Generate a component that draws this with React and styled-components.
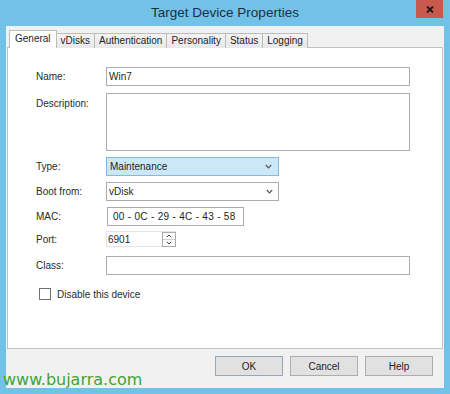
import React from "react"
import styled, { createGlobalStyle, css } from "styled-components"

const GlobalStyle = createGlobalStyle`
  html, body {
    margin: 0;
    padding: 0;
  }
  body {
    background: #72c2e7;
    font-family: "Liberation Sans", Arial, sans-serif;
  }
`

const Frame = styled.div`
  position: relative;
  width: 450px;
  height: 394px;
  background: #72c2e7;
  display: flex;
  flex-direction: column;
  overflow: hidden;
`

const TitleBar = styled.div`
  height: 26px;
  display: grid;
  grid-template-columns: 1fr auto 1fr;
  align-items: start;
`

const Title = styled.div`
  grid-column: 2;
  font-size: 13.5px;
  line-height: 26px;
  color: #1c2f42;
`

const CloseButton = styled.div`
  grid-column: 3;
  justify-self: end;
  margin-right: 7px;
  width: 27px;
  height: 18px;
  background: #c75a4c;
  display: flex;
  align-items: center;
  justify-content: center;
`

const Client = styled.div`
  margin: 0 6px;
  height: 362px;
  background: #f1f1f1;
  padding-top: 5px;
  box-sizing: border-box;
  display: flex;
  flex-direction: column;
`

const TabStrip = styled.div`
  display: flex;
  align-items: flex-end;
  height: 17px;
  padding-left: 3px;
  position: relative;
  z-index: 1;
  margin-bottom: -1px;
`

const Tab = styled.div`
  box-sizing: border-box;
  height: 15px;
  padding: 0 4px;
  margin-left: -1px;
  font-size: 10px;
  line-height: 14px;
  color: #1e1e1e;
  border: 1px solid #bcbcbc;
  border-bottom: none;
  background: linear-gradient(#f3f3f3, #e8e8e8);
  white-space: nowrap;

  ${props =>
    props.$active &&
    css`
      height: 18px;
      margin-left: 0;
      padding: 0 5px;
      line-height: 16px;
      background: #fff;
    `}
`

const Panel = styled.div`
  margin: 0 1px;
  height: 302px;
  box-sizing: border-box;
  background: #fff;
  border: 1px solid #c2c2c2;
  padding: 19px 32px 0 28px;
  display: flex;
  flex-direction: column;
`

const Row = styled.div`
  display: flex;
  align-items: ${props => (props.$top ? "flex-start" : "center")};
  margin-top: ${props => props.$gap || 0}px;
`

const Label = styled.div`
  width: 70px;
  flex: 0 0 70px;
  font-size: 10px;
  color: #2a2a2a;
  padding-top: ${props => (props.$top ? 5 : 0)}px;
`

const Field = styled.div`
  box-sizing: border-box;
  width: ${props => props.$width || 304}px;
  height: ${props => props.$height || 19}px;
  margin-left: ${props => props.$shift || 0}px;
  border: 1px solid #acacac;
  background: ${props => (props.$highlight ? "#cce8f8" : "#fff")};
  border-color: ${props => (props.$highlight ? "#86b9e0" : "#acacac")};
  display: flex;
  align-items: center;
  padding: 0 ${props => props.$pad ?? 2}px;
  font-size: 10px;
  color: #1e1e1e;
  white-space: nowrap;
`

const Value = styled.span`
  flex: 1;
  letter-spacing: ${props => props.$spacing || 0}px;
`

const Chevron = styled.svg`
  width: 7px;
  height: 5px;
  margin-right: 3px;
  flex: 0 0 auto;
`

const PortField = styled(Field)`
  border-color: #e4e4e4;
  padding: 0 0 0 1px;
`

const Spinner = styled.div`
  width: 14px;
  height: 15px;
  box-sizing: border-box;
  border: 1px solid #acacac;
  display: flex;
  flex-direction: column;
  margin-right: -1px;
`

const SpinHalf = styled.div`
  flex: 1;
  display: flex;
  align-items: center;
  justify-content: center;
  border-top: ${props => (props.$lower ? "1px solid #d0d0d0" : "none")};
`

const CheckRow = styled.div`
  display: flex;
  align-items: center;
  margin-top: 13px;
  padding-left: 3px;
  gap: 6px;
  font-size: 10px;
  color: #2a2a2a;
`

const CheckBox = styled.div`
  width: 12px;
  height: 12px;
  box-sizing: border-box;
  border: 1px solid #707070;
  background: #fff;
`

const Footer = styled.div`
  display: flex;
  justify-content: flex-end;
  gap: 7px;
  padding: 7px 11px 0 0;
`

const Button = styled.div`
  width: 68px;
  height: 20px;
  box-sizing: border-box;
  border: 1px solid ${props => (props.$default ? "#8ea8c6" : "#adadad")};
  background: #e1e1e1;
  font-size: 10px;
  color: #1e1e1e;
  display: flex;
  align-items: center;
  justify-content: center;
`

const Watermark = styled.div`
  position: absolute;
  left: 3px;
  top: 372px;
  font-family: "DejaVu Sans", Verdana, sans-serif;
  font-size: 16px;
  line-height: 16px;
  color: #45a236;
`

const tabs = ["General", "vDisks", "Authentication", "Personality", "Status", "Logging"]

const Down = () => (
  <Chevron viewBox="0 0 7 5">
    <path d="M0.8 1 L3.5 3.8 L6.2 1" fill="none" stroke="#555" strokeWidth="1.2" />
  </Chevron>
)

export default function App() {
  return (
    <Frame>
      <GlobalStyle />
      <TitleBar>
        <Title>Target Device Properties</Title>
        <CloseButton>
          <svg width="8" height="7" viewBox="0 0 8 7">
            <path d="M1 0.5 L7 6.5 M7 0.5 L1 6.5" stroke="#1a1a1a" strokeWidth="1.8" />
          </svg>
        </CloseButton>
      </TitleBar>
      <Client>
        <TabStrip>
          {tabs.map((t, i) => (
            <Tab key={t} $active={i === 0}>
              {t}
            </Tab>
          ))}
        </TabStrip>
        <Panel>
          <Row>
            <Label>Name:</Label>
            <Field>
              <Value>Win7</Value>
            </Field>
          </Row>
          <Row $top $gap={7}>
            <Label $top>Description:</Label>
            <Field $height={58} />
          </Row>
          <Row $gap={6}>
            <Label>Type:</Label>
            <Field $width={173} $highlight $pad={3}>
              <Value>Maintenance</Value>
              <Down />
            </Field>
          </Row>
          <Row $gap={6}>
            <Label>Boot from:</Label>
            <Field $width={173}>
              <Value>vDisk</Value>
              <Down />
            </Field>
          </Row>
          <Row $gap={6}>
            <Label>MAC:</Label>
            <Field $width={137} $shift={1} $pad={5}>
              <Value $spacing={0.3}>00 - 0C - 29 - 4C - 43 - 58</Value>
            </Field>
          </Row>
          <Row $gap={5}>
            <Label>Port:</Label>
            <PortField $width={70} $height={16}>
              <Value>6901</Value>
              <Spinner>
                <SpinHalf>
                  <svg width="6" height="4" viewBox="0 0 6 4">
                    <path d="M0.7 3.3 L3 1 L5.3 3.3" fill="none" stroke="#444" strokeWidth="1" />
                  </svg>
                </SpinHalf>
                <SpinHalf $lower>
                  <svg width="6" height="4" viewBox="0 0 6 4">
                    <path d="M0.7 0.7 L3 3 L5.3 0.7" fill="none" stroke="#444" strokeWidth="1" />
                  </svg>
                </SpinHalf>
              </Spinner>
            </PortField>
          </Row>
          <Row $gap={9}>
            <Label>Class:</Label>
            <Field />
          </Row>
          <CheckRow>
            <CheckBox />
            Disable this device
          </CheckRow>
        </Panel>
        <Footer>
          <Button $default>OK</Button>
          <Button>Cancel</Button>
          <Button>Help</Button>
        </Footer>
      </Client>
      <Watermark>www.bujarra.com</Watermark>
    </Frame>
  )
}
